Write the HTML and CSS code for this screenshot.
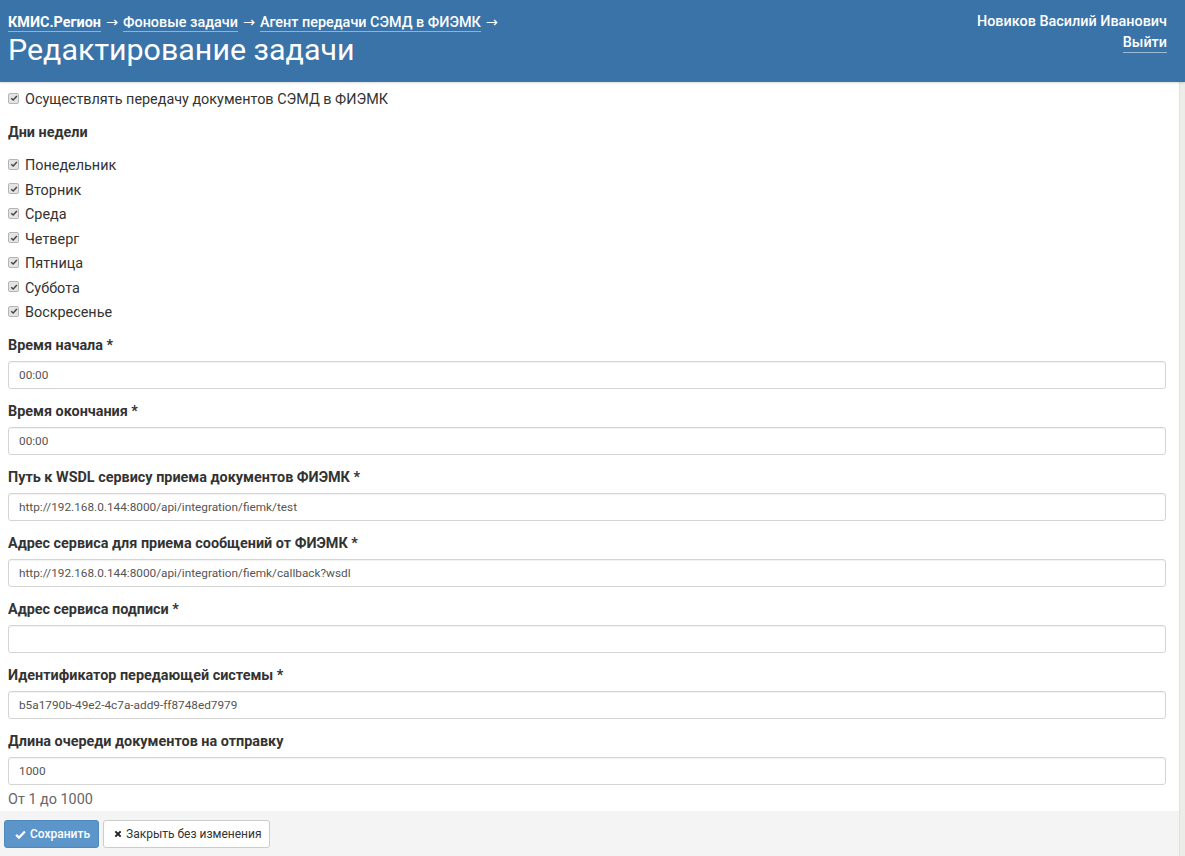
FILE: index.html
```html
<!DOCTYPE html>
<html lang="ru">
<head>
<meta charset="utf-8">
<title>Редактирование задачи</title>
<link rel="stylesheet" href="styles.css">
</head>
<body>
<header class="topbar">
  <div class="topbar-left">
    <nav class="crumbs">
      <a class="crumb crumb-root" href="#">КМИС.Регион</a><span class="arrow">→</span><a class="crumb" href="#">Фоновые задачи</a><span class="arrow">→</span><a class="crumb" href="#">Агент передачи СЭМД в ФИЭМК</a><span class="arrow">→</span>
    </nav>
    <h1 class="title">Редактирование задачи</h1>
  </div>
  <div class="topbar-right">
    <div class="user">Новиков Василий Иванович</div>
    <a class="logout" href="#">Выйти</a>
  </div>
</header>
<div class="page">
  <main class="content">
    <form class="form">
      <div class="check-row first"><span class="cb"><svg viewBox="0 0 10 10" width="8" height="8"><path d="M1.5 5.2 L4 7.6 L8.6 2.4" fill="none" stroke="#444" stroke-width="1.8"/></svg></span>Осуществлять передачу документов СЭМД в ФИЭМК</div>
      <div class="section-label">Дни недели</div>
      <div class="days">
        <div class="check-row"><span class="cb"><svg viewBox="0 0 10 10" width="8" height="8"><path d="M1.5 5.2 L4 7.6 L8.6 2.4" fill="none" stroke="#444" stroke-width="1.8"/></svg></span>Понедельник</div>
        <div class="check-row"><span class="cb"><svg viewBox="0 0 10 10" width="8" height="8"><path d="M1.5 5.2 L4 7.6 L8.6 2.4" fill="none" stroke="#444" stroke-width="1.8"/></svg></span>Вторник</div>
        <div class="check-row"><span class="cb"><svg viewBox="0 0 10 10" width="8" height="8"><path d="M1.5 5.2 L4 7.6 L8.6 2.4" fill="none" stroke="#444" stroke-width="1.8"/></svg></span>Среда</div>
        <div class="check-row"><span class="cb"><svg viewBox="0 0 10 10" width="8" height="8"><path d="M1.5 5.2 L4 7.6 L8.6 2.4" fill="none" stroke="#444" stroke-width="1.8"/></svg></span>Четверг</div>
        <div class="check-row"><span class="cb"><svg viewBox="0 0 10 10" width="8" height="8"><path d="M1.5 5.2 L4 7.6 L8.6 2.4" fill="none" stroke="#444" stroke-width="1.8"/></svg></span>Пятница</div>
        <div class="check-row"><span class="cb"><svg viewBox="0 0 10 10" width="8" height="8"><path d="M1.5 5.2 L4 7.6 L8.6 2.4" fill="none" stroke="#444" stroke-width="1.8"/></svg></span>Суббота</div>
        <div class="check-row"><span class="cb"><svg viewBox="0 0 10 10" width="8" height="8"><path d="M1.5 5.2 L4 7.6 L8.6 2.4" fill="none" stroke="#444" stroke-width="1.8"/></svg></span>Воскресенье</div>
      </div>
      <div class="field">
        <label class="field-label">Время начала *</label>
        <div class="input">00:00</div>
      </div>
      <div class="field">
        <label class="field-label">Время окончания *</label>
        <div class="input">00:00</div>
      </div>
      <div class="field">
        <label class="field-label">Путь к WSDL сервису приема документов ФИЭМК *</label>
        <div class="input">http://192.168.0.144:8000/api/integration/fiemk/test</div>
      </div>
      <div class="field">
        <label class="field-label">Адрес сервиса для приема сообщений от ФИЭМК *</label>
        <div class="input">http://192.168.0.144:8000/api/integration/fiemk/callback?wsdl</div>
      </div>
      <div class="field">
        <label class="field-label">Адрес сервиса подписи *</label>
        <div class="input"></div>
      </div>
      <div class="field">
        <label class="field-label">Идентификатор передающей системы *</label>
        <div class="input">b5a1790b-49e2-4c7a-add9-ff8748ed7979</div>
      </div>
      <div class="field">
        <label class="field-label">Длина очереди документов на отправку</label>
        <div class="input">1000</div>
      </div>
      <div class="hint">От 1 до 1000</div>
    </form>
    <div class="actions">
      <button class="btn btn-primary" type="button"><svg class="ico" viewBox="0 0 12 12" width="11" height="11"><path d="M1.2 6.4 L4.4 9.4 L10.8 2.8" fill="none" stroke="#fff" stroke-width="2.4"/></svg>Сохранить</button>
      <button class="btn btn-default" type="button"><svg class="ico" viewBox="0 0 12 12" width="8" height="8"><path d="M2 2 L10 10 M10 2 L2 10" fill="none" stroke="#222" stroke-width="3"/></svg>Закрыть без изменения</button>
    </div>
  </main>
  <div class="scroll-strip"></div>
</div>
</body>
</html>
```
FILE: styles.css
```css
html, body {
  margin: 0;
  padding: 0;
}
body {
  font-family: Roboto, "Liberation Sans", Arial, sans-serif;
  color: #333;
  background: #fff;
  width: 1185px;
  height: 856px;
  overflow: hidden;
  display: flex;
  flex-direction: column;
}
.topbar {
  background: #3a73a8;
  height: 82px;
  display: flex;
  justify-content: space-between;
  padding: 0 18px 0 8px;
  color: #fff;
  box-shadow: 0 1px 2px rgba(0,0,0,0.15);
  position: relative;
  z-index: 1;
  flex-shrink: 0;
}
.crumbs {
  margin-top: 12px;
  font-size: 14.4px;
  line-height: 20px;
  height: 20px;
  font-weight: 500;
  white-space: nowrap;
}
.crumb {
  color: #fff;
  text-decoration: none;
  border-bottom: 1px solid rgba(255,255,255,0.45);
}
.crumb-root {
  font-weight: 700;
}
.arrow {
  font-family: "DejaVu Sans", sans-serif;
  font-size: 14.4px;
  margin: 0 5px 0 5px;
  font-weight: 400;
}
.title {
  margin: 1px 0 0;
  font-size: 30.4px;
  line-height: 34px;
  font-weight: 400;
}
.topbar-right {
  text-align: right;
  font-size: 14.4px;
  line-height: 20px;
  font-weight: 500;
  padding-top: 12px;
}
.logout {
  display: inline-block;
  margin-top: 1px;
  color: #fff;
  text-decoration: none;
  border-bottom: 1px solid rgba(255,255,255,0.5);
  line-height: 19px;
}
.page {
  flex: 1;
  display: flex;
  min-height: 0;
}
.content {
  flex: 1;
  display: flex;
  flex-direction: column;
  min-width: 0;
}
.scroll-strip {
  width: 5px;
  background: #ecece8;
  border-left: 1px solid #e2e2dc;
}
.form {
  padding: 8px 13px 0 8px;
  flex: 1;
}
.check-row {
  display: flex;
  align-items: center;
  font-size: 14.4px;
  line-height: 20px;
  height: 24.5px;
}
.check-row.first {
  height: 20px;
}
.cb {
  width: 9px;
  height: 9px;
  border: 1px solid #b5b5b5;
  background: #e4e4e4;
  border-radius: 2px;
  display: inline-flex;
  align-items: center;
  justify-content: center;
  margin-right: 6px;
  margin-top: -4px;
  flex-shrink: 0;
}
.section-label {
  font-size: 14.4px;
  font-weight: 700;
  line-height: 20px;
  margin-top: 13px;
  margin-bottom: 11px;
}
.days {
  display: flex;
  flex-direction: column;
}
.field {
  margin-top: 13px;
}
.days + .field {
  margin-top: 10px;
}
.field-label {
  display: block;
  font-size: 14.4px;
  font-weight: 700;
  line-height: 20px;
  margin-bottom: 5px;
}
.input {
  height: 28px;
  box-sizing: border-box;
  border: 1px solid #d4d4d4;
  border-radius: 3px;
  box-shadow: inset 0 1px 1px rgba(0,0,0,0.05);
  font-size: 11.8px;
  line-height: 26px;
  color: #555;
  padding: 0 10px;
  background: #fff;
}
.hint {
  font-size: 14.4px;
  line-height: 20px;
  color: #666;
  margin-top: 5px;
}
.actions {
  background: #f4f4f4;
  height: 45px;
  box-sizing: border-box;
  padding: 9px 4px 0;
  display: flex;
  gap: 5px;
  align-items: flex-start;
  flex-shrink: 0;
}
.btn {
  height: 28px;
  box-sizing: border-box;
  border-radius: 3px;
  font-family: Roboto, "Liberation Sans", Arial, sans-serif;
  font-size: 12px;
  display: inline-flex;
  align-items: center;
  gap: 4px;
  padding: 0 10px;
  white-space: nowrap;
  cursor: pointer;
}
.btn-primary {
  background: #5b95c9;
  border: 1px solid #4f88bd;
  color: #fff;
  font-weight: 500;
  width: 95px;
}
.btn-default {
  background: #fff;
  border: 1px solid #ccc;
  color: #333;
  width: 167px;
  margin-left: -1px;
}
.ico {
  flex-shrink: 0;
}
```
